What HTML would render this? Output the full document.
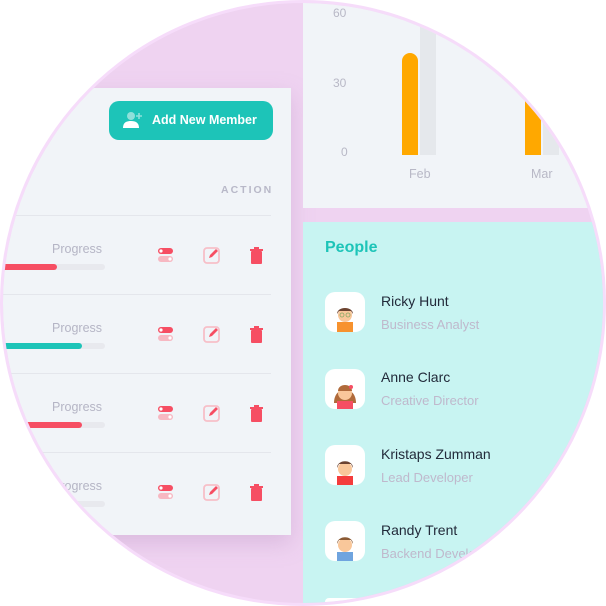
<!DOCTYPE html>
<html><head><style>
html,body{margin:0;padding:0;background:#fff;width:606px;height:606px;overflow:hidden;font-family:"Liberation Sans",sans-serif}
.c{position:absolute;left:0;top:0;width:600px;height:600px;border-radius:50%;overflow:hidden;border:3px solid #f6dcfa;background:#efd3f1}
.in{position:absolute;left:-3px;top:-3px;width:606px;height:606px;overflow:hidden}
.card{position:absolute;background:#f1f4f8}
.lc{left:-20px;top:88px;width:311px;height:447px;box-shadow:0 8px 20px rgba(180,140,190,.35)}
.btn{position:absolute;left:109px;top:101px;width:164px;height:39px;background:#1dc4b8;border-radius:10px;color:#fff;font-weight:bold;font-size:12.5px}
.btn span{position:absolute;left:43px;top:12px}
.hd{position:absolute;top:184px;font-size:10.5px;font-weight:bold;letter-spacing:2px;color:#b8b8c8}
.ln{position:absolute;left:0;width:271px;height:1px;background:#e4e6ec}
.pt{position:absolute;left:52px;font-size:12.5px;color:#b5b5c5}
.bar{position:absolute;left:0;width:105px;height:6px;border-radius:3px;background:#e8e9ee}
.bar i{position:absolute;left:0;top:0;height:6px;border-radius:3px}
.ic{position:absolute}
.rt{left:303px;top:-10px;width:285px;height:218px}
.ax{position:absolute;font-size:12px;color:#b8b8c6}
.pc{position:absolute;left:303px;top:222px;width:303px;height:384px;background:#c8f4f2}
.av{position:absolute;left:325px;width:40px;height:40px;border-radius:10px;background:#fff;overflow:hidden}
.nm{position:absolute;left:381px;font-size:14px;color:#222a3a}
.rl{position:absolute;left:381px;font-size:13px;color:#bfb8cc}
</style></head><body>
<div class="c"><div class="in">
<div class="card lc"></div>
<div class="btn"><svg style="position:absolute;left:13px;top:10px" width="22" height="18" viewBox="0 0 22 18"><circle cx="9" cy="5" r="4" fill="#8fe0da"/><path d="M1 17c0-5 3-7 8-7s8 2 8 7z" fill="#fff"/><path d="M17 2v6M14 5h6" stroke="#8fe0da" stroke-width="1.6"/></svg><span>Add New Member</span></div>
<div class="hd" style="left:4px">SS</div>
<div class="hd" style="left:221px">ACTION</div>
<div class="ln" style="top:215px"></div><div class="ln" style="top:294px"></div><div class="ln" style="top:373px"></div><div class="ln" style="top:452px"></div>

<div class="pt" style="top:242px">Progress</div><div class="bar" style="top:264px"><i style="width:57px;background:#f64e63"></i></div>
<div class="pt" style="top:321px">Progress</div><div class="bar" style="top:343px"><i style="width:82px;background:#1dc4b8"></i></div>
<div class="pt" style="top:400px">Progress</div><div class="bar" style="top:422px"><i style="width:82px;background:#f64e63"></i></div>
<div class="pt" style="top:479px">Progress</div><div class="bar" style="top:501px"></div>

<svg class="ic" style="left:0;top:0" width="300" height="606">
<g id="r">
<rect x="158" y="248" width="15" height="6" rx="3" fill="#f64e63"/><circle cx="161" cy="251" r="1.6" fill="#fff"/>
<rect x="158" y="256" width="15" height="6" rx="3" fill="#f7b8c2"/><circle cx="170" cy="259" r="1.6" fill="#fff"/>
<rect x="204" y="248" width="15" height="15" rx="3" fill="none" stroke="#f7bfc8" stroke-width="1.8"/>
<path d="M209 258l1-3 6-6 2 2-6 6z" fill="#f64e63"/>
<rect x="251" y="251" width="11" height="13" rx="1" fill="#f64e63"/><rect x="250" y="249" width="13" height="2" fill="#f64e63"/><rect x="254" y="247" width="5" height="2" fill="#f64e63"/>
</g>
<use href="#r" y="79"/><use href="#r" y="158"/><use href="#r" y="237"/>
</svg>

<div class="card rt"></div>
<div class="ax" style="left:333px;top:6px">60</div>
<div class="ax" style="left:333px;top:76px">30</div>
<div class="ax" style="left:341px;top:145px">0</div>
<div style="position:absolute;left:402px;top:53px;width:16px;height:102px;background:#ffa800;border-radius:8px 8px 0 0"></div>
<div style="position:absolute;left:420px;top:25px;width:16px;height:130px;background:#e5e8ec"></div>
<div style="position:absolute;left:525px;top:100px;width:16px;height:55px;background:#ffa800"></div>
<div style="position:absolute;left:543px;top:120px;width:16px;height:35px;background:#e5e8ec"></div>
<div class="ax" style="left:409px;top:167px;font-size:12.5px">Feb</div>
<div class="ax" style="left:531px;top:167px;font-size:12.5px">Mar</div>

<div class="pc"></div>
<div style="position:absolute;left:325px;top:239px;font-size:16px;font-weight:bold;color:#1dc4b8">People</div>

<div class="av" style="top:292px"><svg width="40" height="40"><rect x="12" y="30" width="16" height="10" fill="#f7922e"/><circle cx="20" cy="23" r="7" fill="#f9c79a"/><path d="M12 22c0-8 16-8 16 0l-2-3h-12z" fill="#6b4331"/><circle cx="17" cy="23" r="2" fill="none" stroke="#8a6" stroke-width=".8"/><circle cx="23" cy="23" r="2" fill="none" stroke="#8a6" stroke-width=".8"/></svg></div>
<div class="nm" style="top:293px">Ricky Hunt</div><div class="rl" style="top:317px">Business Analyst</div>

<div class="av" style="top:369px"><svg width="40" height="40"><path d="M9 34c0-18 22-18 22 0z" fill="#b06a3a"/><rect x="12" y="32" width="16" height="8" fill="#f64e63"/><circle cx="20" cy="24" r="7" fill="#f9c79a"/><path d="M13 22c0-8 14-8 14 0z" fill="#b06a3a"/><circle cx="26" cy="18" r="2" fill="#f64e63"/></svg></div>
<div class="nm" style="top:369px">Anne Clarc</div><div class="rl" style="top:393px">Creative Director</div>

<div class="av" style="top:445px"><svg width="40" height="40"><rect x="12" y="31" width="16" height="9" fill="#f43c3c"/><circle cx="20" cy="24" r="7" fill="#f9c79a"/><path d="M12 23c0-9 16-9 16 0l-2-4h-12z" fill="#6b4331"/></svg></div>
<div class="nm" style="top:446px">Kristaps Zumman</div><div class="rl" style="top:470px">Lead Developer</div>

<div class="av" style="top:521px"><svg width="40" height="40"><rect x="12" y="31" width="16" height="9" fill="#6fa4df"/><circle cx="20" cy="24" r="7" fill="#f9c79a"/><path d="M12 23c0-9 16-9 16 0l-2-4h-12z" fill="#8b5a34"/></svg></div>
<div class="nm" style="top:522px">Randy Trent</div><div class="rl" style="top:546px">Backend Developer</div>
<div class="av" style="top:598px;height:8px"></div>
</div></div>
</body></html>
